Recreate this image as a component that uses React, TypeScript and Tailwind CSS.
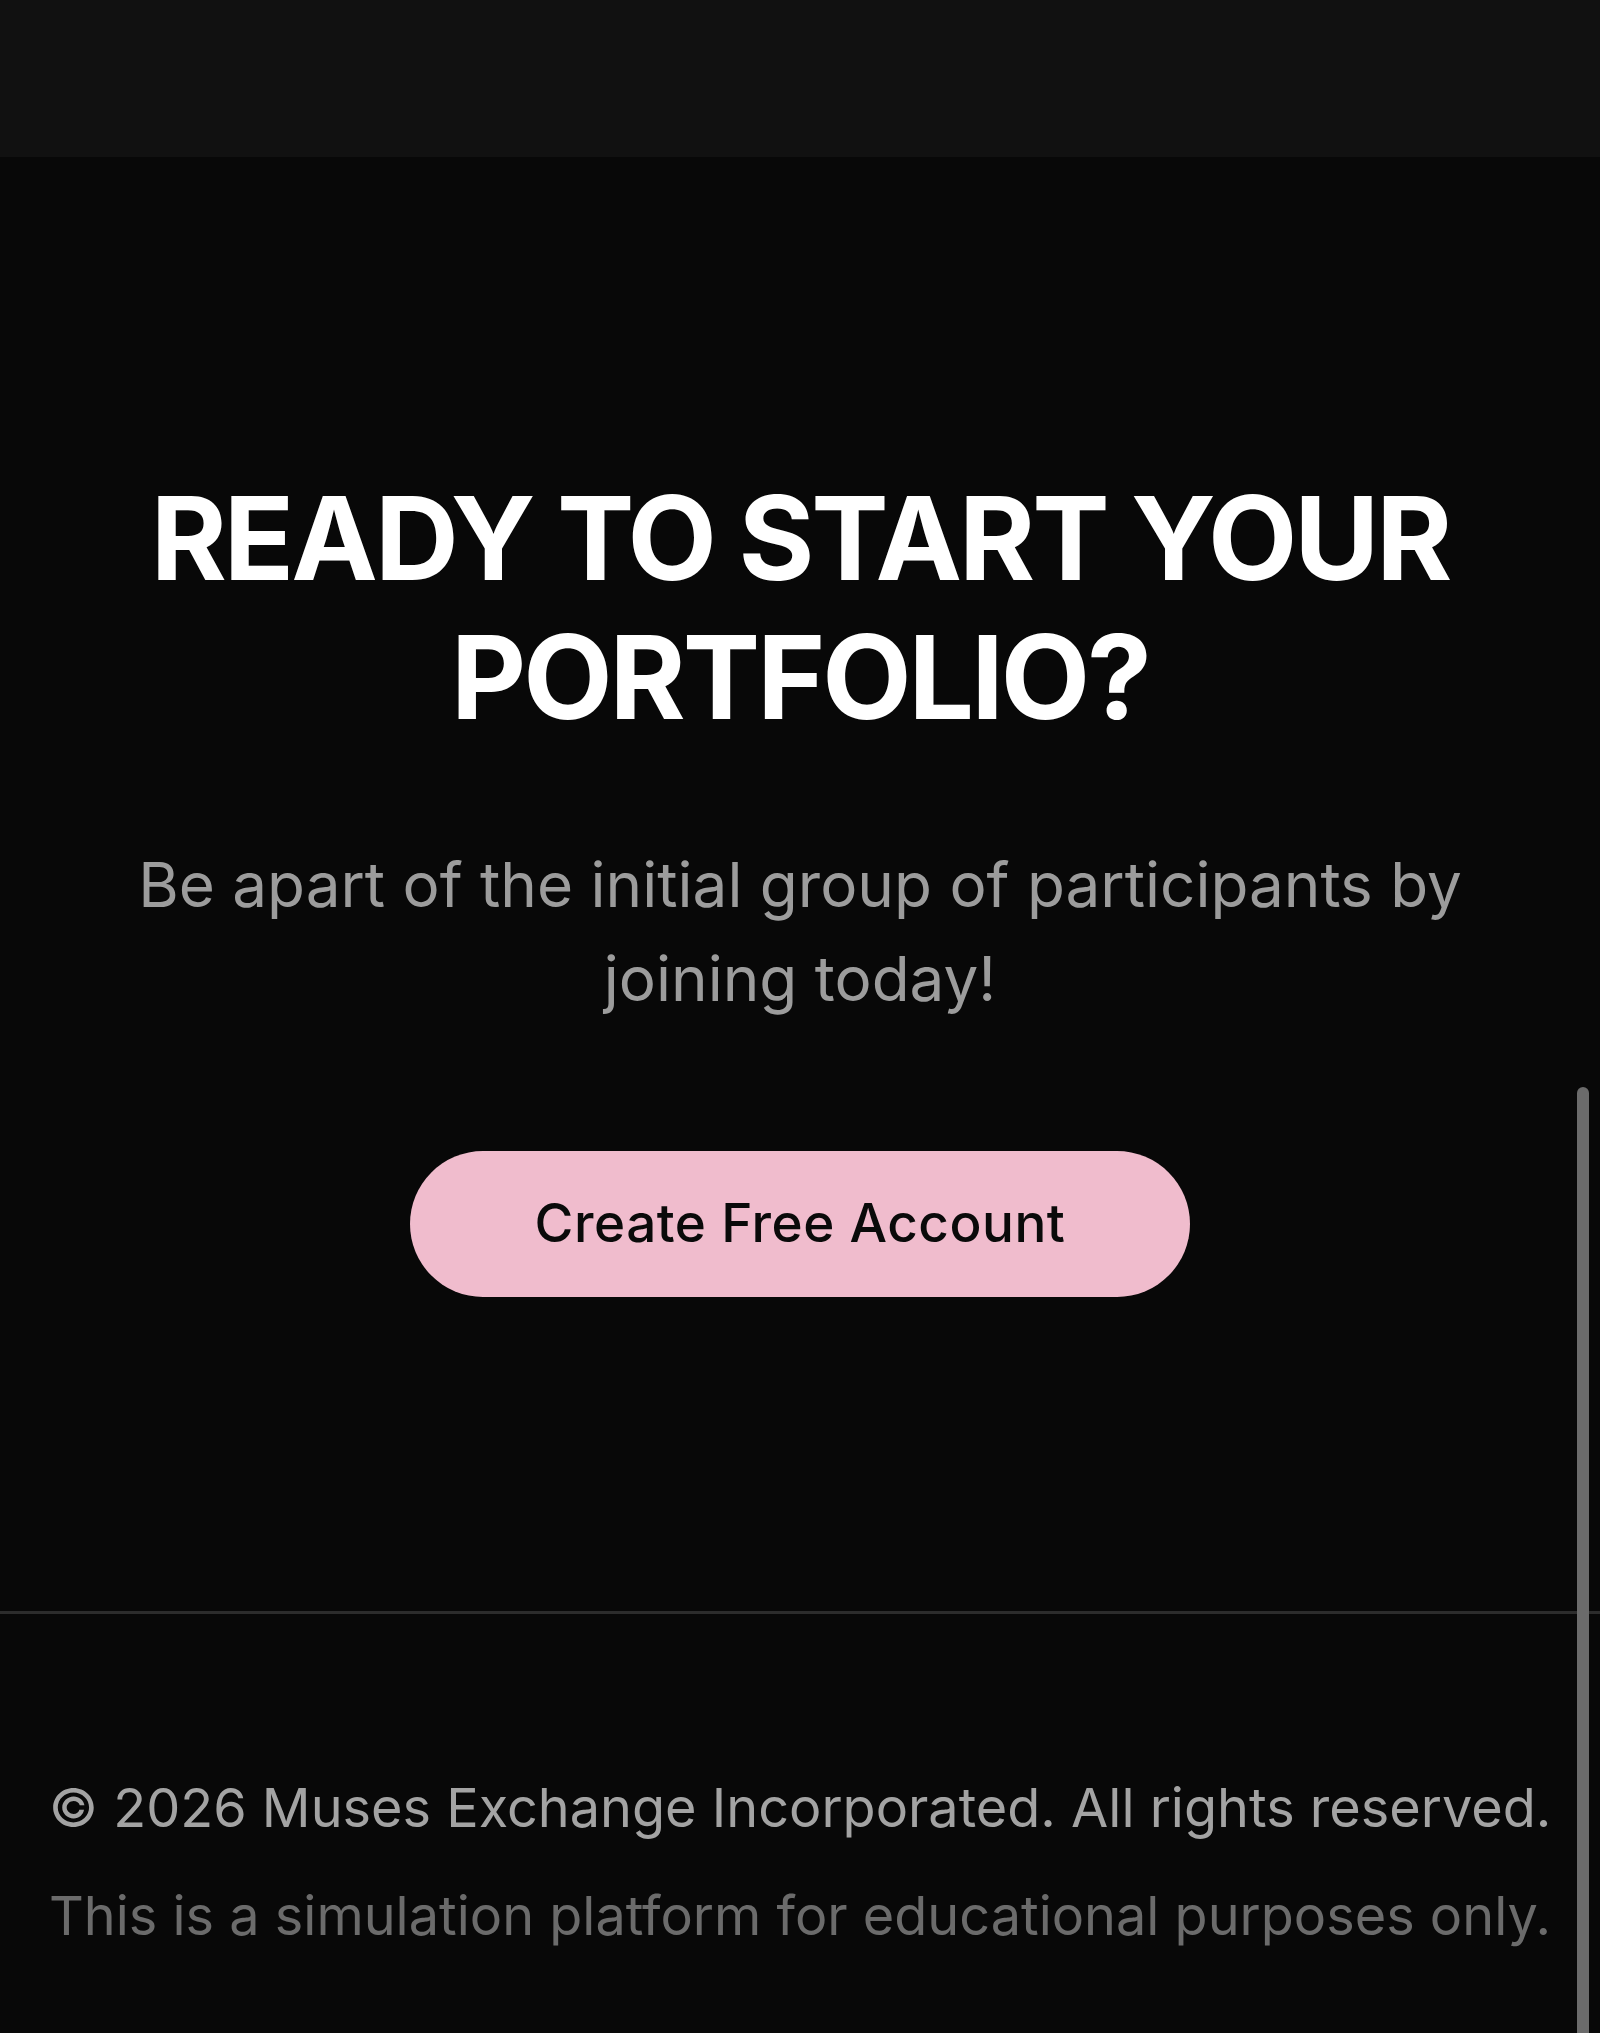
import React from "react";

export default function App() {
  return (
    <div className="relative min-h-[2033px] w-full overflow-hidden bg-[#080808]" style={{ fontFamily: "Inter, 'Noto Sans', sans-serif" }}>
      <div className="h-[157px] w-full bg-[#111111]" />
      <section className="flex flex-col items-center px-[40px] pt-[312px]">
        <h1 className="text-center text-[116px] font-bold leading-[139px] tracking-[-0.026em] text-white">
          READY TO START YOUR
          <br />
          PORTFOLIO?
        </h1>
        <p className="mt-[91px] max-w-[1340px] text-center text-[62px] leading-[94px] text-[#9c9c9c]">
          Be apart of the initial group of participants by joining today!
        </p>
        <button className="mt-[125px] flex h-[146px] w-[780px] items-center justify-center rounded-full bg-[#f0bccd] text-[53px] font-medium tracking-[0.01em] text-[#0a0a0a]">
          Create Free Account
        </button>
      </section>
      <div className="mt-[314px] h-[3px] w-full bg-[#2c2c2c]" />
      <footer className="flex flex-col items-center pt-[153px]">
        <p className="text-center text-[54px] leading-[82px] text-[#a3a3a3]">
          © 2026 Muses Exchange Incorporated. All rights reserved.
        </p>
        <p className="mt-[26px] text-center text-[54px] leading-[82px] text-[#6b6b6b]">
          This is a simulation platform for educational purposes only.
        </p>
      </footer>
      <div className="absolute left-[1577px] top-[1087px] h-[1000px] w-[12px] rounded-full bg-[#6b6b6b]" />
    </div>
  );
}
